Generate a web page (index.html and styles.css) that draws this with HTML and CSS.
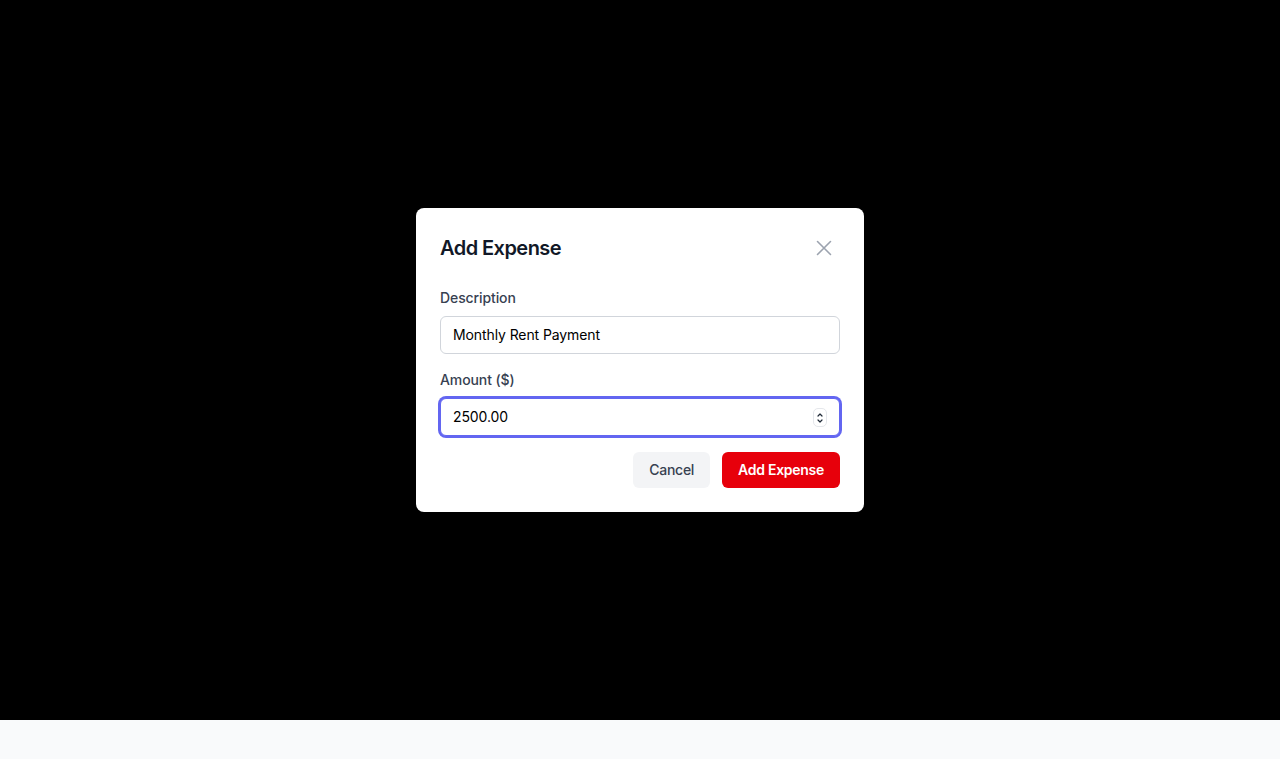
FILE: index.html
```html
<!DOCTYPE html>
<html lang="en">
<head>
<meta charset="utf-8">
<title>Add Expense</title>
<link rel="stylesheet" href="styles.css">
</head>
<body>
<div class="overlay">
  <div class="modal">
    <div class="modal-header">
      <h2 class="modal-title">Add Expense</h2>
      <button class="close-btn" aria-label="Close">
        <svg width="24" height="24" viewBox="0 0 24 24" fill="none" stroke="currentColor" stroke-width="1.6" stroke-linecap="round"><path d="M5.5 5.5l13 13M18.5 5.5l-13 13"/></svg>
      </button>
    </div>
    <div class="field">
      <label class="label">Description</label>
      <input class="input" type="text" value="Monthly Rent Payment">
    </div>
    <div class="field">
      <label class="label">Amount ($)</label>
      <div class="input-wrap">
        <input class="input input-focus" type="text" value="2500.00">
        <span class="spinner">
          <svg width="12" height="18" viewBox="0 0 12 18" fill="none" stroke="#1f2937" stroke-width="1.2" stroke-linecap="round" stroke-linejoin="round"><path d="M4 7l2-2 2 2"/><path d="M4 11l2 2 2-2"/></svg>
        </span>
      </div>
    </div>
    <div class="actions">
      <button class="btn btn-cancel">Cancel</button>
      <button class="btn btn-primary">Add Expense</button>
    </div>
  </div>
</div>
</body>
</html>
```
FILE: styles.css
```css
* { box-sizing: border-box; }
html, body { margin: 0; padding: 0; }
body {
  background: #f9fafb;
  font-family: Inter, "Noto Sans", "Liberation Sans", sans-serif;
  height: 759px;
}
.overlay {
  height: 720px;
  background: #000;
  display: flex;
  align-items: center;
  justify-content: center;
}
.modal {
  width: 448px;
  background: #fff;
  border-radius: 8px;
  padding: 24px;
}
.modal-header {
  display: flex;
  align-items: center;
  justify-content: space-between;
  height: 32px;
  margin-bottom: 24px;
}
.modal-title {
  margin: 0;
  font-size: 20px;
  line-height: 28px;
  font-weight: 600;
  color: #111827;
  letter-spacing: -0.55px;
}
.close-btn {
  width: 32px;
  height: 32px;
  border: 0;
  background: transparent;
  padding: 0;
  color: #9ca3af;
  display: flex;
  align-items: center;
  justify-content: center;
}
.field {
  display: flex;
  flex-direction: column;
  margin-bottom: 16px;
}
.label {
  font-size: 14px;
  line-height: 20px;
  font-weight: 500;
  color: #374151;
  margin-bottom: 8px;
  letter-spacing: -0.1px;
}
.input {
  width: 100%;
  height: 38px;
  border: 1px solid #d1d5db;
  border-radius: 6px;
  padding: 0 12px 1px;
  font-family: inherit;
  font-size: 14px;
  color: #000;
  background: #fff;
  outline: none;
  letter-spacing: -0.1px;
}
.input-wrap {
  position: relative;
}
.input-focus {
  border-color: #6366f1;
  box-shadow: 0 0 0 2px #6366f1;
}
.spinner {
  position: absolute;
  right: 13px;
  top: 10px;
  width: 14px;
  height: 19px;
  border: 1px solid #e5e7eb;
  border-radius: 5px;
  display: flex;
  align-items: center;
  justify-content: center;
  background: #fff;
}
.actions {
  display: flex;
  justify-content: flex-end;
  gap: 12px;
}
.btn {
  height: 36px;
  border: 0;
  border-radius: 6px;
  font-family: inherit;
  font-size: 14px;
  padding: 0 16px 1px;
  letter-spacing: -0.28px;
}
.btn-cancel {
  background: #f3f4f6;
  color: #374151;
  font-weight: 500;
}
.btn-primary {
  background: #e7000b;
  color: #fff;
  font-weight: 600;
}
```
